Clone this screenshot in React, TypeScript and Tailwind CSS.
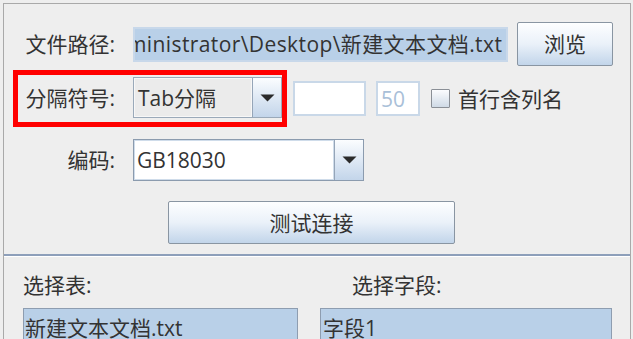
import React from "react";

const font = { fontFamily: '"Open Sans", "Noto Sans CJK SC", sans-serif' };

function Arrow() {
  return (
    <svg width="15" height="8" viewBox="0 0 15 8">
      <path d="M0.5 0.5 H14.5 L7.5 7.5 Z" fill="#2b2b2b" />
    </svg>
  );
}

function ArrowButton({ w }: { w: string }) {
  return (
    <div
      className={`${w} h-full flex items-center justify-center border-l border-[#95a5b8] bg-gradient-to-b from-[#fbfdff] to-[#c3d5ea]`}
    >
      <Arrow />
    </div>
  );
}

function Label({ text }: { text: string }) {
  return <div className="w-[97px] text-right whitespace-nowrap">{text}</div>;
}

export default function App() {
  return (
    <div
      className="w-[633px] h-[339px] overflow-hidden bg-[#eeeeee] text-[21px] leading-[28px] text-[#333333]"
      style={font}
    >
      <div className="ml-[3px] mt-[3px] w-[628px] h-[400px] border-l border-t border-r border-[#a9a9a9]">
        {/* file path */}
        <div className="mt-[18px] pl-[14px] h-[44px] flex items-center">
          <Label text="文件路径:" />
          <div className="ml-[18px] w-[375px] h-[35px] border-2 border-[#c8d8ea] bg-[#b9d0e8] overflow-hidden flex items-center pl-[1px] whitespace-nowrap">
            <span className="ml-[-9px] tracking-[0.4px]">ministrator\Desktop\新建文本文档.txt</span>
          </div>
          <button className="ml-[9px] w-[96px] h-[44px] rounded-[2px] border border-[#8995a2] bg-gradient-to-b from-[#fdfeff] via-[#eaf1f9] to-[#c2d5ea]">
            浏览
          </button>
        </div>

        {/* separator row */}
        <div className="mt-[4px] flex items-center">
          <div className="ml-[9px] w-[274px] h-[57px] border-[5px] border-[#ff0000] flex items-start pt-[2px]">
            <div className="h-[41px] flex items-center">
              <Label text="分隔符号:" />
            </div>
            <div className="ml-[18px] w-[149px] h-[41px] border border-[#9aa9b9] bg-[#ebebeb] flex">
              <div className="flex-1 flex items-center pl-[3px] border border-[#f7f7f7]">Tab分隔</div>
              <ArrowButton w="w-[29px]" />
            </div>
          </div>
          <div className="ml-[6px] w-[73px] h-[35px] border-2 border-[#c9d8e8] bg-white" />
          <div className="ml-[10px] w-[44px] h-[35px] border-2 border-[#c9d8e8] bg-white flex items-center pl-[3px] text-[#a9c0d8]">
            50
          </div>
          <div className="ml-[11px] w-[19px] h-[19px] border border-[#8a8f96] rounded-[1px] bg-gradient-to-b from-[#fbfcfe] to-[#cfdae6]" />
          <div className="ml-[8px] whitespace-nowrap">首行含列名</div>
        </div>

        {/* encoding */}
        <div className="mt-[12px] pl-[14px] h-[42px] flex items-center">
          <Label text="编码:" />
          <div className="ml-[18px] w-[231px] h-[42px] border border-[#8b9bae] flex">
            <div className="flex-1 bg-white border border-[#cfdcea] flex items-center pl-[2px]">GB18030</div>
            <ArrowButton w="w-[29px]" />
          </div>
        </div>

        {/* test button */}
        <div className="mt-[20px] pl-[164px]">
          <button className="w-[287px] h-[43px] rounded-[2px] border border-[#8995a2] bg-gradient-to-b from-[#fdfeff] via-[#eaf1f9] to-[#c2d5ea]">
            测试连接
          </button>
        </div>

        <div className="mt-[10px] h-[2px] bg-[#8d9fba]" />
        <div className="h-[1px] bg-white" />

        {/* tables and fields */}
        <div className="mt-[14px] flex">
          <div className="pl-[19px] w-[348px]">选择表:</div>
          <div>选择字段:</div>
        </div>
        <div className="mt-[9px] flex">
          <div className="ml-[19px] w-[275px] h-[60px] border border-[#8e9db0] bg-[#b9d0e8] pl-[1px] pt-[5px] whitespace-nowrap">
            新建文本文档.txt
          </div>
          <div className="ml-[22px] w-[292px] h-[60px] border border-[#8e9db0] bg-[#b9d0e8] pl-[2px] pt-[5px] whitespace-nowrap">
            字段1
          </div>
        </div>
      </div>
    </div>
  );
}
